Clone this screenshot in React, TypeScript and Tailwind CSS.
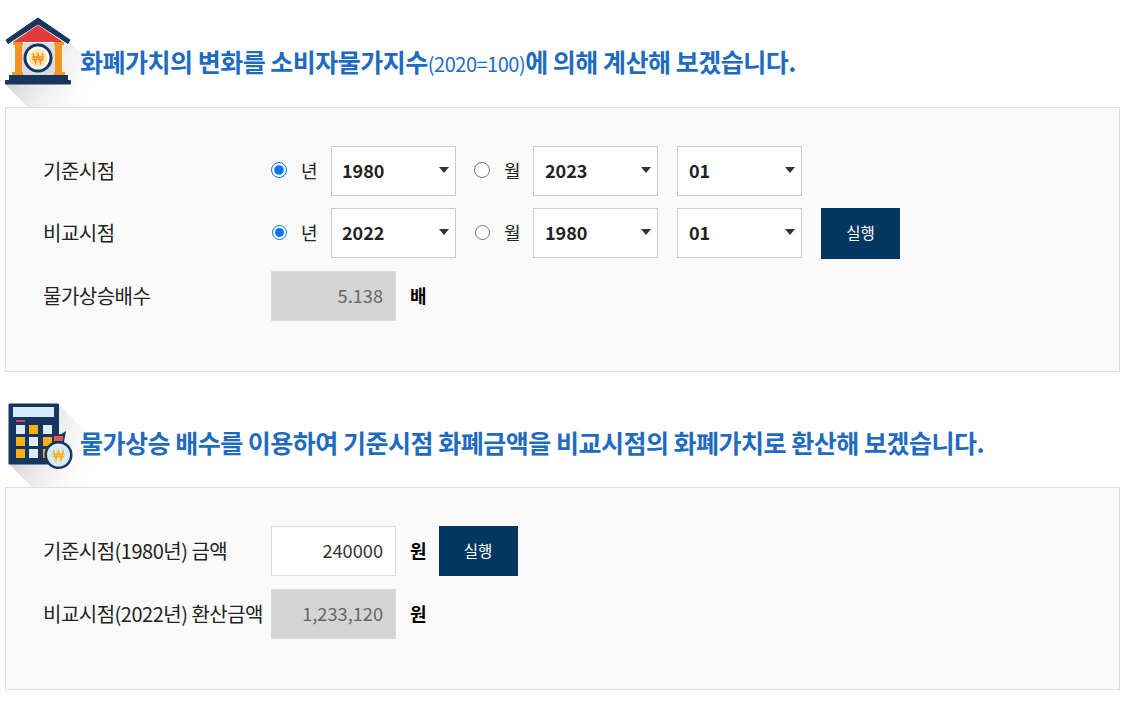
import React from "react";

function BankIcon() {
  return (
    <svg width="125" height="107" viewBox="0 0 125 107" className="absolute left-0 top-0">
      <defs>
        <linearGradient id="s1" x1="0" y1="0" x2="1" y2="0.3">
          <stop offset="0" stopColor="#b8b8b8" stopOpacity="0.95" />
          <stop offset="1" stopColor="#ffffff" stopOpacity="0" />
        </linearGradient>
      </defs>
      <path d="M68 40 L124 96 L124 107 L28 107 L5 84 Z" fill="url(#s1)" />
      <rect x="22" y="43" width="33" height="33" fill="#d9dde0" />
      <path d="M38 18 L70 40 L68 43.500 L38 24 L8 43.500 L6 40 Z" fill="#16365f" strokeLinejoin="round" stroke="#16365f" strokeWidth="1" />
      <path d="M38 25 L63 42 L13 42 Z" fill="#e23b3b" />
      <rect x="13" y="42" width="10" height="3" fill="#f7941d" />
      <rect x="54" y="42" width="10" height="3" fill="#f7941d" />
      <rect x="15" y="44" width="7" height="29" fill="#f7941d" />
      <rect x="55" y="44" width="7" height="29" fill="#f7941d" />
      <rect x="12" y="72" width="11" height="4" fill="#f7941d" />
      <rect x="54" y="72" width="11" height="4" fill="#f7941d" />
      <circle cx="38" cy="58" r="13" fill="#ffffff" stroke="#16365f" strokeWidth="3" />
      <circle cx="38" cy="58" r="9" fill="#fbe6b0" />
      <path d="M33 53 L35.500 63 L38 54 L40.500 63 L43 53 M32 57 H44 M32 59.500 H44" fill="none" stroke="#f7941d" strokeWidth="1.400" />
      <rect x="9" y="75" width="59" height="5" fill="#16365f" />
      <rect x="5" y="80" width="66" height="4.500" rx="1" fill="#16365f" />
    </svg>
  );
}

function CalcIcon() {
  const cells: [number, number, string][] = [
    [16, 425, "#dcecf7"], [29, 425, "#fbb116"], [43, 425, "#dcecf7"],
    [16, 437, "#fbb116"], [29, 437, "#dcecf7"], [43, 437, "#fbb116"],
    [16, 449, "#fbb116"], [29, 449, "#dcecf7"], [43, 449, "#fbb116"],
  ];
  return (
    <svg width="125" height="115" viewBox="0 372 125 115" className="absolute left-0 top-0">
      <defs>
        <linearGradient id="s2" x1="0" y1="0" x2="1" y2="0.3">
          <stop offset="0" stopColor="#b8b8b8" stopOpacity="0.95" />
          <stop offset="1" stopColor="#ffffff" stopOpacity="0" />
        </linearGradient>
      </defs>
      <path d="M58 404 L124 470 L124 487 L32 487 L9 464 Z" fill="url(#s2)" />
      <rect x="8.500" y="403.500" width="50.500" height="61" rx="1" fill="#16365f" />
      <rect x="13" y="407" width="41" height="10" fill="#d3ebfb" />
      <rect x="16" y="420" width="9" height="2" fill="#d8483c" />
      {cells.map(([x, y, c], i) => (
        <rect key={i} x={x} y={y} width="9" height="9" fill={c} />
      ))}
      <path d="M52 433 Q59 437 66 431 L64 442 L55 442 Z" fill="#16365f" />
      <rect x="54" y="436" width="9" height="5" fill="#e2574c" />
      <circle cx="58.500" cy="455" r="14" fill="#16365f" />
      <circle cx="58.500" cy="455" r="11.500" fill="#d3ebfb" />
      <path d="M53.500 450 L56 460 L58.500 451 L61 460 L63.500 450 M52.500 454 H64.500 M52.500 456.500 H64.500" fill="none" stroke="#fbb116" strokeWidth="1.500" />
    </svg>
  );
}

function Radio({ checked, name, small }: { checked: boolean; name: string; small?: boolean }) {
  return (
    <input
      type="radio"
      name={name}
      defaultChecked={checked}
      className={small ? "m-0 ml-[1px] -mt-[1px] w-[15px] h-[15px] shrink-0" : "m-0 -mt-[2px] w-4 h-4 shrink-0"}
    />
  );
}

function Sel({ v, inset }: { v: string; inset?: boolean }) {
  return (
    <div className="relative w-[125px] h-[50px] shrink-0">
      <select
        defaultValue={v}
        className={`appearance-none w-full h-full bg-white border border-[#ccc] ${inset ? "pl-[11px]" : "pl-[10px]"} pb-[1px] text-[18px] font-bold text-[#222]`}
      >
        <option>{v}</option>
      </select>
      <span className="absolute right-[7px] top-[21px] w-0 h-0 border-x-[5.5px] border-x-transparent border-t-[6px] border-t-[#333]" />
    </div>
  );
}

function Btn({ tall }: { tall?: boolean }) {
  return (
    <button className={`w-[79px] ${tall ? "h-[51px]" : "h-[50px]"} bg-[#033761] text-white text-[15.5px] pb-[1px] shrink-0`}>
      실행
    </button>
  );
}

function Field({ v, gray }: { v: string; gray?: boolean }) {
  return (
    <div
      className={`w-[125px] h-[50px] shrink-0 flex items-center justify-end pr-3 border text-[18.2px] ${
        gray ? "bg-[#d4d4d4] border-[#dadada] text-[#666]" : "bg-white border-[#ddd] text-[#333]"
      }`}
    >
      {v}
    </div>
  );
}

function Row({ label, children, cls = "" }: { label: string; children: React.ReactNode; cls?: string }) {
  return (
    <div className={`flex items-center h-[50px] ${cls}`}>
      <div className="w-[228px] -ml-[1px] shrink-0 text-[20px] leading-[28px] text-[#222] tracking-[-0.5px] whitespace-nowrap">{label}</div>
      {children}
    </div>
  );
}

function DateRow({ label, y, m1, m2, name, cls, second }: { label: string; y: string; m1: string; m2: string; name: string; cls?: string; second?: boolean }) {
  return (
    <Row label={label} cls={cls}>
      <div className="w-[60px] flex items-center shrink-0">
        <Radio checked name={name} small={second} />
        <span className="ml-[14px] text-[18px] text-[#222] pb-[2px]">년</span>
      </div>
      <Sel v={y} />
      <div className="w-[77px] pl-[18px] flex items-center shrink-0">
        <Radio checked={false} name={name} small={second} />
        <span className="ml-[14px] text-[18px] text-[#222] pb-[2px]">월</span>
      </div>
      <Sel v={m1} inset />
      <div className="w-[19px] shrink-0" />
      <Sel v={m2} inset />
      {second && <div className="w-[19px] shrink-0" />}
      {second && <Btn tall />}
    </Row>
  );
}

function Unit({ t }: { t: string }) {
  return <span className="ml-[14px] text-[18px] font-bold text-black pb-[2px]">{t}</span>;
}

export default function App() {
  return (
    <div
      className="w-[1133px] h-[706px] bg-white overflow-hidden pl-[5px] pr-[13px]"
      style={{ fontFamily: '"Noto Sans CJK KR", "Noto Sans", sans-serif' }}
    >
      <div className="relative -ml-[5px] h-[107px] pl-[80px] pt-[43px]">
        <BankIcon />
        <h2 className="relative text-[25px] leading-[36px] font-bold text-[#1e6bc0] tracking-[-0.5px] whitespace-nowrap">
          화폐가치의 변화를 소비자물가지수<span className="text-[20px] font-normal">(2020=100)</span>에 의해 계산해 보겠습니다.
        </h2>
      </div>
      <div className="h-[265px] bg-[#fafafa] border border-[#ddd] pt-[38px] pl-[38px]">
        <DateRow label="기준시점" y="1980" m1="2023" m2="01" name="a" />
        <DateRow label="비교시점" y="2022" m1="1980" m2="01" name="b" cls="mt-[12px]" second />
        <Row label="물가상승배수" cls="mt-[13px]">
          <Field v="5.138" gray />
          <Unit t="배" />
        </Row>
      </div>
      <div className="relative -ml-[5px] h-[115px] pl-[80px] pt-[52px]">
        <CalcIcon />
        <h2 className="relative text-[25px] leading-[36px] font-bold text-[#1e6bc0] tracking-[-0.5px] whitespace-nowrap">
          물가상승 배수를 이용하여 기준시점 화폐금액을 비교시점의 화폐가치로 환산해 보겠습니다.
        </h2>
      </div>
      <div className="h-[203px] bg-[#fafafa] border border-[#ddd] pt-[38px] pl-[38px]">
        <Row label="기준시점(1980년) 금액">
          <Field v="240000" />
          <Unit t="원" />
          <div className="ml-[12px]"><Btn /></div>
        </Row>
        <Row label="비교시점(2022년) 환산금액" cls="mt-[13px]">
          <Field v="1,233,120" gray />
          <Unit t="원" />
        </Row>
      </div>
    </div>
  );
}
